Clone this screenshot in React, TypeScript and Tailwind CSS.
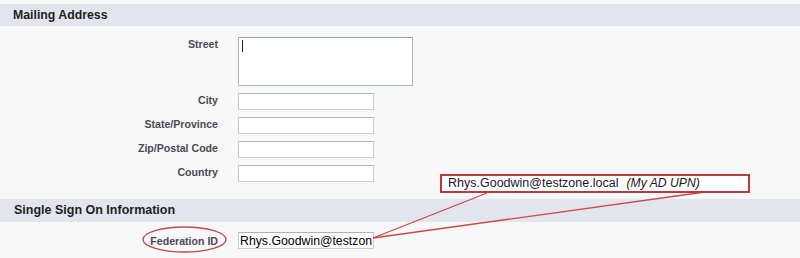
import React from 'react';

const labelCls = "text-right text-[10.6px] font-bold text-[#4a4a56] leading-[14px]";
const inputCls =
  "w-[136px] h-[17px] bg-white border border-[#c8cbcf] border-t-[#aeb3b8] rounded-[1px]";

const Field = ({ label }: { label: string }) => (
  <>
    <div className={labelCls}>{label}</div>
    <div className={inputCls} />
  </>
);

export default function App() {
  return (
    <div
      className="relative w-[800px] h-[258px] overflow-hidden bg-[#f8f8f8] pt-[4px]"
      style={{ fontFamily: '"Liberation Sans", Arial, sans-serif' }}
    >
      {/* Mailing Address */}
      <div className="h-[22px] bg-[#e3e5ee] pl-[13px] flex items-center text-[12.3px] font-bold text-[#1e1e1e]">
        Mailing Address
      </div>

      <div className="mt-[11px] grid grid-cols-[218px_auto] gap-x-[20px] gap-y-[7px] justify-start">
        <div className={labelCls}>Street</div>
        <div className="w-[175px] h-[49px] bg-white border border-[#aab7be] border-t-[#8f9ea6] rounded-[1px] pl-[3px] pt-[2px]">
          <div className="w-px h-[12px] bg-[#222]" />
        </div>
        <Field label="City" />
        <Field label="State/Province" />
        <Field label="Zip/Postal Code" />
        <Field label="Country" />
      </div>

      {/* Single Sign On */}
      <div className="mt-[17px] h-[23px] bg-[#e3e5ee] pl-[14px] flex items-center text-[12.5px] font-bold text-[#1e1e1e]">
        Single Sign On Information
      </div>

      <div className="mt-[10px] grid grid-cols-[218px_auto] gap-x-[20px] justify-start items-center">
        <div className={labelCls}>Federation ID</div>
        <div className={`${inputCls} overflow-hidden whitespace-nowrap pl-[1px] text-[12.3px] leading-[16px] text-black`}>
          Rhys.Goodwin@testzon
        </div>
      </div>

      {/* Annotation overlay */}
      <svg
        className="absolute left-0 top-0 pointer-events-none"
        width="800"
        height="258"
        viewBox="0 0 800 258"
      >
        <line x1="373" y1="238" x2="487" y2="193" stroke="#d0454a" strokeWidth="1.3" />
        <line x1="373" y1="238" x2="705" y2="192" stroke="#d0454a" strokeWidth="1.3" />
        <ellipse cx="184.5" cy="239.5" rx="41.5" ry="12.5" fill="none" stroke="#c24a4f" strokeWidth="1.4" />
      </svg>

      <div className="absolute left-[440px] top-[174px] w-[310px] h-[19px] bg-white border-2 border-[#b9393d] flex items-center pl-[6px] whitespace-nowrap text-[12.5px] text-[#1a1a1a]">
        <span>Rhys.Goodwin@testzone.local</span>
        <span className="ml-[8px] italic text-[12.2px]">(My AD UPN)</span>
      </div>
    </div>
  );
}
